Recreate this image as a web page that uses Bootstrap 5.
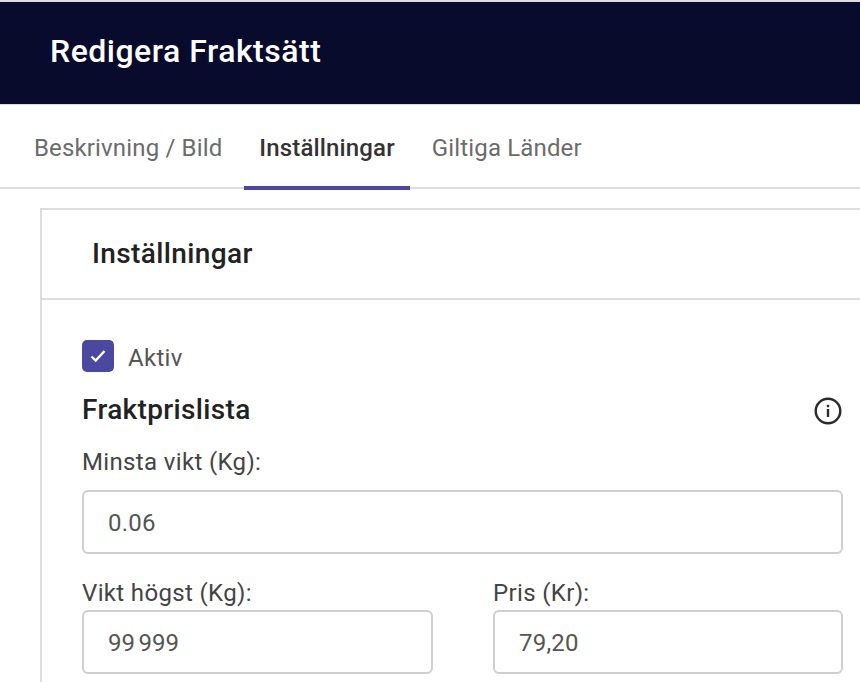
<!DOCTYPE html>
<html lang="sv">
<head>
    <meta charset="UTF-8">
    <title>Redigera Fraktsätt</title>
    <link href="https://cdn.jsdelivr.net/npm/bootstrap@5.3.0/dist/css/bootstrap.min.css" rel="stylesheet">
    <style>
        html, body { height: 682px; overflow: hidden; }
        body { font-family: Roboto, "Liberation Sans", sans-serif; background: #fff; color: #222; }
        .page-head { height: 105px; background: #090b2c; border-top: 2px solid #dcdcdc; border-bottom: 1px solid #dcdcdc; padding: 0 0 3px 50px; }
        .page-head h1 { font-size: 32px; font-weight: 500; color: #fff; margin: 0; letter-spacing: .5px; }
        .tab-bar { height: 84px; border-bottom: 2px solid #dcdcdc; padding-left: 19px; }
        .tab-bar .nav-link { height: 85px; padding: 5px 15px 0; margin-right: 7px; display: flex; align-items: center; font-size: 24px; color: #6b6b6b; border-bottom: 4px solid transparent; letter-spacing: .15px; }
        .tab-bar .nav-link.active { color: #333; font-weight: 500; letter-spacing: .15px; border-bottom-color: #4a489f; }
        .settings-box { margin: 19px 0 0 40px; border: 2px solid #dcdcdc; border-right: 0; }
        .settings-head { height: 90px; padding-left: 50px; border-bottom: 2px solid #dcdcdc; }
        .settings-head h2 { font-size: 28px; font-weight: 500; margin: 0; letter-spacing: .38px; color: #222; }
        .settings-body { width: 801px; padding: 40px 0 40px 40px; }
        .active-check { gap: 14px; height: 32px; margin-bottom: 20px; font-size: 24px; color: #555; letter-spacing: .3px; }
        .active-check span:last-child { padding-top: 3px; }
        .check-box { width: 32px; height: 32px; background: #4a489f; border-radius: 5px; }
        .price-head { height: 36px; }
        .price-head h3 { font-size: 28px; font-weight: 500; margin: 0; letter-spacing: .35px; color: #222; }
        .field-label { display: block; font-size: 24px; color: #444; line-height: 32px; padding-top: 1px; margin: 0 0 12px; letter-spacing: .35px; }
        .field-input { height: 64px; font-size: 24px; color: #555; border: 2px solid #cfcfcf; border-radius: 6px; padding: 2px 24px 0; letter-spacing: .2px; }
        .first-field { margin: 17px 0 22px; }
        .price-row .field-label { margin-bottom: 1px; }
        .price-row .field-input { width: 351px; }
        .price-row > div:last-child .field-input { width: 350px; }
        #hogst { letter-spacing: 0; word-spacing: -2.5px; }
        .info-icon { margin: 2px 1.5px 0 0; }
    </style>
</head>
<body>
<header class="page-head d-flex align-items-center">
    <h1>Redigera Fraktsätt</h1>
</header>

<ul class="nav tab-bar">
    <li class="nav-item"><a class="nav-link" href="#">Beskrivning / Bild</a></li>
    <li class="nav-item"><a class="nav-link active" href="#">Inställningar</a></li>
    <li class="nav-item"><a class="nav-link" href="#">Giltiga Länder</a></li>
</ul>

<section class="settings-box">
    <div class="settings-head d-flex align-items-center">
        <h2>Inställningar</h2>
    </div>
    <div class="settings-body">
        <div class="active-check d-flex align-items-center">
            <span class="check-box d-flex align-items-center justify-content-center">
                <svg width="16" height="14" viewBox="0 0 16 14"><path d="M1.5 7.5l4.200 4 8.800-9.500" fill="none" stroke="#fff" stroke-width="2.400"/></svg>
            </span>
            <span>Aktiv</span>
        </div>
        <div class="price-head d-flex align-items-center justify-content-between">
            <h3>Fraktprislista</h3>
            <svg class="info-icon" width="28" height="28" viewBox="0 0 28 28">
                <circle cx="14" cy="14" r="12.300" fill="none" stroke="#2b2b2b" stroke-width="2.400"/>
                <rect x="12.800" y="12" width="2.400" height="8" fill="#2b2b2b"/>
                <rect x="12.800" y="7.800" width="2.400" height="2.400" fill="#2b2b2b"/>
            </svg>
        </div>
        <div class="first-field">
            <label class="field-label" for="minsta">Minsta vikt (Kg):</label>
            <input class="form-control field-input" id="minsta" value="0.06">
        </div>
        <div class="price-row d-flex justify-content-between">
            <div>
                <label class="field-label" for="hogst">Vikt högst (Kg):</label>
                <input class="form-control field-input" id="hogst" value="99 999">
            </div>
            <div>
                <label class="field-label" for="pris">Pris (Kr):</label>
                <input class="form-control field-input" id="pris" value="79,20">
            </div>
        </div>
    </div>
</section>
<script src="https://cdn.jsdelivr.net/npm/bootstrap@5.3.0/dist/js/bootstrap.bundle.min.js"></script>
</body>
</html>
